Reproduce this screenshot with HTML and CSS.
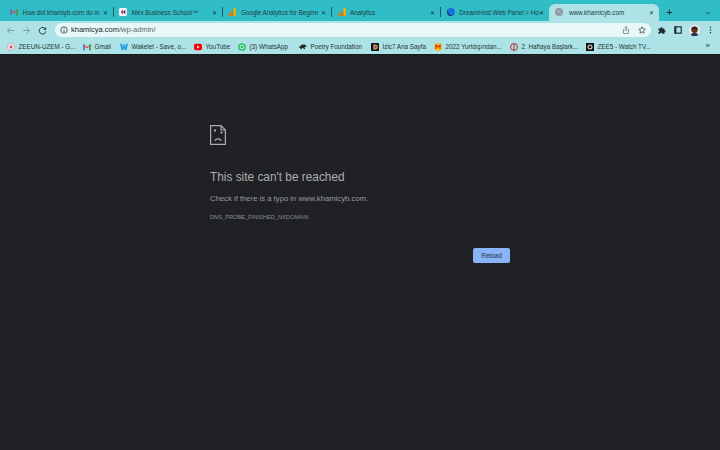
FILE: index.html
```html
<!DOCTYPE html>
<html lang="en">
<head>
<meta charset="utf-8">
<title>www.khamicyb.com</title>
<link rel="stylesheet" href="styles.css">
</head>
<body>
<div class="tabs">
  <div class="tab"><svg class="fav" viewBox="0 0 10 8"><path d="M0 8V0l5 4 5-4v8H8V3.500L5 6 2 3.500V8z" fill="#e8453c"/><path d="M0 8V1h2v7z" fill="#3f7ee8"/><path d="M8 8V1h2v7z" fill="#2fa84f"/></svg><span class="tt">How did khamiyb.com do in</span><span class="x">✕</span></div>
  <div class="sep"></div>
  <div class="tab"><svg class="fav" viewBox="0 0 10 10"><rect width="10" height="10" rx="2" fill="#f4f4f8"/><path d="M2 5l3-3v6z" fill="#d92b4a"/><path d="M5 5l3-3v6z" fill="#3b3f8f"/></svg><span class="tt">Mex Business School™</span><span class="x">✕</span></div>
  <div class="sep"></div>
  <div class="tab"><svg class="fav" viewBox="0 0 10 10"><rect x="7" y="0" width="3" height="10" rx="1" fill="#f9ab00"/><rect x="3.500" y="4" width="3" height="6" rx="1" fill="#e37400"/><circle cx="1.500" cy="8.500" r="1.500" fill="#e37400"/></svg><span class="tt">Google Analytics for Beginn</span><span class="x">✕</span></div>
  <div class="sep"></div>
  <div class="tab"><svg class="fav" viewBox="0 0 10 10"><rect x="7" y="0" width="3" height="10" rx="1" fill="#f9ab00"/><rect x="3.500" y="4" width="3" height="6" rx="1" fill="#e37400"/><circle cx="1.500" cy="8.500" r="1.500" fill="#e37400"/></svg><span class="tt">Analytics</span><span class="x">✕</span></div>
  <div class="sep"></div>
  <div class="tab"><svg class="fav" viewBox="0 0 10 10"><circle cx="5" cy="5" r="5" fill="#1a6fe0"/><path d="M1 2a5 5 0 0 0 6 7.600A6 6 0 0 1 1 2z" fill="#12315f"/></svg><span class="tt">DreamHost Web Panel &gt; Ho</span><span class="x">✕</span></div>
  <div class="tab active"><svg class="fav" viewBox="0 0 10 10"><circle cx="5" cy="5" r="5" fill="#8f9b9e"/><path d="M2 3h3l1 2-2 1zM6 7l2-1v2z" fill="#b6c0c2"/></svg><span class="tt">www.khamicyb.com</span><span class="x">✕</span></div>
  <span class="plus">+</span>
  <svg class="chev" viewBox="0 0 8 5"><path d="M1 1l3 3 3-3" fill="none" stroke="#20474b" stroke-width="1.100"/></svg>
</div>
<div class="toolbar">
  <svg class="nav" viewBox="0 0 10 10"><path d="M9 5H1.500M5 1.500L1.500 5 5 8.500" fill="none" stroke="#7a9a9d" stroke-width="1.100"/></svg>
  <svg class="nav" viewBox="0 0 10 10"><path d="M1 5h7.500M5 1.500L8.500 5 5 8.500" fill="none" stroke="#7a9a9d" stroke-width="1.100"/></svg>
  <svg class="nav" viewBox="0 0 10 10"><path d="M8.300 3.500A3.700 3.700 0 1 0 8.700 6" fill="none" stroke="#263a3d" stroke-width="1.100"/><path d="M9 1v3.200H5.800z" fill="#263a3d"/></svg>
  <div class="omni">
    <svg class="info" viewBox="0 0 10 10"><circle cx="5" cy="5" r="4" fill="none" stroke="#2a3a3c" stroke-width="1"/><path d="M5 4.500V7.500M5 2.500v1" stroke="#2a3a3c" stroke-width="1"/></svg>
    <span class="url"><b>khamicya.com</b>/wp-admin/</span>
    <svg class="oi" viewBox="0 0 10 10"><path d="M3 4H2v5.500h6V4H7M5 6.500V.8M3.500 2.200L5 .8l1.500 1.400" fill="none" stroke="#5b6b6d" stroke-width=".9"/></svg>
    <svg class="oi" viewBox="0 0 10 10"><path d="M5 1l1.200 2.700 2.900.3-2.200 2 .7 2.900L5 7.400 2.400 8.900l.7-2.900-2.200-2 2.900-.3z" fill="none" stroke="#2f3f41" stroke-width=".9"/></svg>
  </div>
  <div class="tools">
    <svg class="ti" viewBox="0 0 10 10"><path d="M.5 3h2.300a1.400 1.400 0 0 1 2.800 0h2.400v2.200a1.400 1.400 0 0 1 0 2.800v1.700H5.600a1.400 1.400 0 0 0-2.800 0H.5V7.800a1.400 1.400 0 0 0 0-2.800z" fill="#1e2a2c"/></svg>
    <svg class="ti" viewBox="0 0 10 10"><rect x="1" y="1" width="8" height="8" fill="none" stroke="#1e2a2c" stroke-width="1.400"/><rect x="1" y="1" width="2" height="8" fill="#1e2a2c"/></svg>
    <svg class="ava" viewBox="0 0 10 10"><circle cx="5" cy="5" r="5" fill="#f1ece8"/><path d="M1.500 8.800C2 6.800 8 6.800 8.500 8.800A5 5 0 0 1 1.500 8.800z" fill="#2f3346"/><circle cx="5" cy="4.300" r="2.900" fill="#5d3226"/><path d="M2 4C2.200.7 7.800.7 8 4 6 2.700 4 2.700 2 4z" fill="#20110c"/></svg>
    <svg class="dots" viewBox="0 0 3 10"><circle cx="1.500" cy="1.500" r=".9" fill="#1e2a2c"/><circle cx="1.500" cy="5" r=".9" fill="#1e2a2c"/><circle cx="1.500" cy="8.500" r=".9" fill="#1e2a2c"/></svg>
  </div>
</div>
<div class="bookmarks">
  <div class="bm w1"><svg class="bi" viewBox="0 0 10 10"><circle cx="5" cy="5" r="4.500" fill="#f3e6e8" stroke="#c9a3ad"/><circle cx="5" cy="5" r="1.800" fill="#c0516c"/></svg>ZEEUN-UZEM - G...</div>
  <div class="bm w2"><svg class="bi" viewBox="0 0 10 8"><path d="M0 8V0l5 4 5-4v8H8V3.500L5 6 2 3.500V8z" fill="#e8453c"/><path d="M0 8V1h2v7z" fill="#3f7ee8"/><path d="M8 8V1h2v7z" fill="#2fa84f"/></svg>Gmail</div>
  <div class="bm w3"><svg class="bi" viewBox="0 0 10 8"><path d="M0 0h2.500l1 5 1-5h1l1 5 1-5H10L8 8H6L5 4 4 8H2z" fill="#1d9be0"/></svg>Wakelet - Save, o...</div>
  <div class="bm w4"><svg class="bi" viewBox="0 0 10 8"><rect width="10" height="8" rx="2" fill="#f00"/><path d="M4 2l3 2-3 2z" fill="#fff"/></svg>YouTube</div>
  <div class="bm w5"><svg class="bi" viewBox="0 0 10 10"><circle cx="5" cy="5" r="4.800" fill="#22c35e"/><circle cx="5" cy="5" r="2.400" fill="none" stroke="#fff"/></svg>(3) WhatsApp</div>
  <div class="bm w6"><svg class="bi" viewBox="0 0 10 8"><path d="M0 4l4-3h3l3 2-3 1 1 3-4-2-1 2z" fill="#262626"/></svg>Poetry Foundation</div>
  <div class="bm w7"><svg class="bi" viewBox="0 0 10 10"><rect width="10" height="10" rx="1" fill="#14141c"/><path d="M3 2h2.500a3 3 0 0 1 0 6H3z" fill="#e0b01c"/><path d="M4.500 3.500h1a1.500 1.500 0 0 1 0 3h-1z" fill="#8a2bd0"/></svg>İzlc7 Ana Sayfa</div>
  <div class="bm w8"><svg class="bi" viewBox="0 0 10 10"><circle cx="5" cy="5" r="5" fill="#f2c51c"/><path d="M2.500 7.500v-5L5 5l2.500-2.500v5" fill="none" stroke="#c3202a" stroke-width="1.300"/></svg>2022 Yurtdışından...</div>
  <div class="bm w9"><svg class="bi" viewBox="0 0 10 10"><circle cx="5" cy="5" r="4.300" fill="none" stroke="#b3262e" stroke-width="1.200"/><path d="M5 1v8" stroke="#b3262e" stroke-width="1.200"/></svg>2. Haftaya Başlark...</div>
  <div class="bm w10"><svg class="bi" viewBox="0 0 10 10"><rect width="10" height="10" fill="#111"/><circle cx="5" cy="5" r="2.500" fill="none" stroke="#e9e4e4" stroke-width="1.300"/></svg>ZEE5 - Watch TV...</div>
  <span class="more">»</span>
</div>
<main class="page">
  <div class="err">
    <svg class="sad" viewBox="0 0 16 20"><path d="M.6.600h10.400l4.400 4.400v14.400H.6zM11 .600v4.400h4.400" fill="none" stroke="#a9acaf" stroke-width="1.200"/><rect x="4" y="4.500" width="2" height="2" fill="#a9acaf"/><rect x="10.500" y="6.500" width="2" height="2" fill="#a9acaf"/><path d="M4.800 15.800c1-2.600 5.400-2.600 6.400 0" fill="none" stroke="#a9acaf" stroke-width="1.100"/></svg>
    <h1 class="title">This site can't be reached</h1>
    <p class="msg">Check if there is a typo in www.khamicyb.com.</p>
    <p class="code">DNS_PROBE_FINISHED_NXDOMAIN</p>
    <div class="actions"><button class="reload">Reload</button></div>
  </div>
</main>
</body>
</html>
```
FILE: styles.css
```css
* { box-sizing: border-box; }
html, body { margin: 0; height: 100%; }
body { width: 720px; height: 450px; overflow: hidden; background: #202124; font-family: "Liberation Sans", Arial, sans-serif; display: flex; flex-direction: column; }
.tabs { height: 21px; background: #31bdc6; display: flex; align-items: flex-end; padding-left: 4.500px; flex: none; }
.tab { width: 108.200px; height: 17px; display: flex; align-items: center; padding: 0 5px 1px 5.500px; color: #1c3f43; font-size: 6.300px; flex: none; }
.fav { width: 8px; height: 8px; flex: none; margin-right: 4.500px; }
.tt { flex: 1; white-space: nowrap; min-width: 0; }
.x { font-size: 6px; margin-left: 2px; color: #1a3438; flex: none; }
.sep { width: 1px; height: 10px; background: #1c5a60; margin-bottom: 4px; flex: none; }
.tab.active { background: #ade3e6; width: 110px; border-radius: 6px 6px 0 0; margin-left: -.500px; padding-left: 6px; }
.tab.active .fav { margin-right: 6px; }
.plus { width: 21px; text-align: center; font-size: 11px; line-height: 16px; height: 17px; color: #12292c; flex: none; }
.chev { width: 6px; height: 4px; margin: 0 0 6px 25px; flex: none; }
.toolbar { height: 18px; background: #ade3e6; display: flex; align-items: center; padding-left: 6px; flex: none; }
.nav { width: 9px; height: 9px; margin-right: 7px; flex: none; }
.omni { width: 596px; height: 14px; margin-left: 1px; margin-top: -1px; border-radius: 7px; background: #e8f8f9; display: flex; align-items: center; padding: 0 5px 0 5px; flex: none; color: #22292b; }
.info { width: 8px; height: 8px; margin-right: 3px; flex: none; }
.url { flex: 1; font-size: 7.500px; color: #596a6c; white-space: nowrap; }
.url b { font-weight: normal; color: #1d2526; }
.oi { width: 8px; height: 8px; margin-left: 8px; flex: none; }
.tools { display: flex; align-items: center; margin-left: 7px; }
.ti { width: 8px; height: 8px; margin-right: 8px; flex: none; }
.ava { width: 11px; height: 11px; margin-right: 8.500px; margin-left: -1px; flex: none; }
.dots { width: 3px; height: 8px; flex: none; }
.bookmarks { height: 16px; background: #ade3e6; display: flex; align-items: center; padding-left: 7px; color: #263336; font-size: 6.300px; flex: none; border-bottom: 1px solid #14191a; position: relative; }
.bm { display: flex; align-items: center; white-space: nowrap; flex: none; }
.bi { width: 8px; height: 8px; margin-right: 3.500px; flex: none; }
.w1 { width: 76px; } .w2 { width: 37px; } .w3 { width: 74px; } .w4 { width: 44px; } .w5 { width: 61px; }
.w6 { width: 72px; } .w7 { width: 63px; } .w8 { width: 76px; } .w9 { width: 76px; } .w10 { width: 72px; }
.more { font-size: 8px; position: absolute; right: 10px; top: 2px; }
.page { flex: 1; background: #202124; padding: 70px 0 0 210px; }
.err { width: 300px; color: #9aa0a6; }
.sad { display: block; width: 16px; height: 20px; }
.title { margin: 25px 0 0; font-size: 11.850px; line-height: 14px; font-weight: normal; color: #abaeb1; }
.msg { margin: 10px 0 0; font-size: 7.700px; line-height: 10px; color: #979ba0; }
.code { margin: 9px 0 0; font-size: 5.700px; line-height: 8px; color: #8b9095; }
.actions { display: flex; justify-content: flex-end; margin-top: 27px; }
.reload { width: 37px; height: 15px; border: 0; padding: 0; border-radius: 2px; background: #8ab4f8; color: #28324a; font: 6.500px "Liberation Sans", Arial, sans-serif; }
```
